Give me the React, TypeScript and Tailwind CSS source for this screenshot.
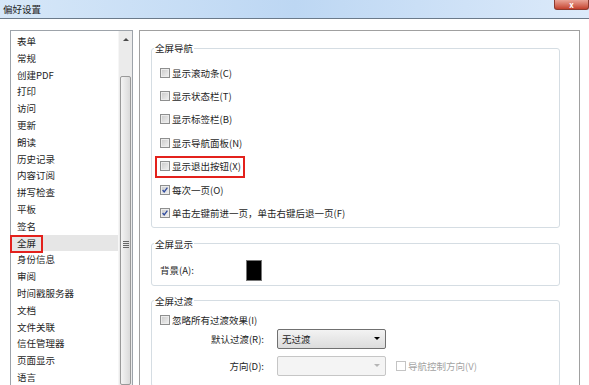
import React from "react";

const categories = [
    "表单", "常规", "创建PDF", "打印", "访问", "更新", "朗读", "历史记录", "内容订阅", "拼写检查",
    "平板", "签名", "全屏", "身份信息", "审阅", "时间戳服务器", "文档", "文件关联", "信任管理器", "页面显示", "语言",
];

const navOptions = [
    { label: "显示滚动条(C)", checked: false },
    { label: "显示状态栏(T)", checked: false },
    { label: "显示标签栏(B)", checked: false },
    { label: "显示导航面板(N)", checked: false },
    { label: "显示退出按钮(X)", checked: false, marked: true },
    { label: "每次一页(O)", checked: true },
    { label: "单击左键前进一页，单击右键后退一页(F)", checked: true },
];

function Checkbox({ checked = false, disabled = false }: { checked?: boolean; disabled?: boolean }) {
    if (disabled) {
        return <span className="w-[10px] h-[10px] shrink-0 border border-[#c4c4c4] bg-white" />;
    }
    return (
        <span className="relative w-[10px] h-[10px] shrink-0 border border-[#8e8f8f] bg-linear-to-br from-[#c9c9c9] to-[#f2f2f2] shadow-[inset_0_0_0_1px_#ececec]">
            {checked && (
                <svg viewBox="0 0 10 10" className="absolute inset-0 w-full h-full">
                    <polyline points="2,5 4,7.5 8,2" fill="none" stroke="#2e4a9e" strokeWidth="1.6" />
                </svg>
            )}
        </span>
    );
}

function Select({ value, disabled = false }: { value?: string; disabled?: boolean }) {
    return (
        <div
            className={
                disabled
                    ? "w-[109px] h-[20px] border border-[#c6c6c6] rounded-[2px] bg-[#f4f4f4] flex items-center justify-end pr-[5px]"
                    : "w-[109px] h-[20px] border border-[#707070] rounded-[2px] bg-linear-to-b from-[#f3f3f3] to-[#dcdcdc] flex items-center justify-between pl-[4px] pr-[5px]"
            }
        >
            {value && <span>{value}</span>}
            <span
                className={
                    disabled
                        ? "w-0 h-0 border-x-[3px] border-x-transparent border-t-[3px] border-t-[#b5b5b5]"
                        : "w-0 h-0 border-x-[3px] border-x-transparent border-t-[3px] border-t-black"
                }
            />
        </div>
    );
}

export default function App() {
    return (
        <div className="w-[589px] h-[385px] overflow-hidden bg-white flex flex-col text-[9.5px] text-[#1e1e1e] font-['Noto_Sans_CJK_SC','Noto_Sans',sans-serif]">
            {/* Title bar */}
            <div className="h-[19px] shrink-0 border-b border-[#6b7a8a] flex items-start justify-between bg-linear-to-r from-[#d6e7f8] via-[#bdd7f3] to-[#dceafa]">
                <span className="pl-[3px] leading-[18px]">偏好设置</span>
                <div className="w-[35px] h-[10px] rounded-b-[3px] border border-t-0 border-[#8c3b30] bg-linear-to-b from-[#e9a497] to-[#c3402d] flex items-center justify-center text-white text-[8px] leading-none font-bold">
                    x
                </div>
            </div>

            <div className="flex flex-1 min-h-0 pt-[11px] pl-[10px] pr-[9px] gap-[6px]">
                {/* Category list */}
                <div className="w-[123px] shrink-0 border border-b-0 border-[#9da3aa] flex">
                    <div className="flex-1 pt-[2px]">
                        {categories.map((c) =>
                            c === "全屏" ? (
                                <div key={c} className="relative h-[16.8px] leading-[16.8px] pl-[6px] bg-[#e6e6e6]">
                                    {c}
                                    <span className="absolute left-[-1px] top-[0px] w-[33px] h-[18px] border-2 border-[#e3211c]" />
                                </div>
                            ) : (
                                <div key={c} className="h-[16.8px] leading-[16.8px] pl-[6px]">
                                    {c}
                                </div>
                            )
                        )}
                    </div>
                    {/* Scrollbar */}
                    <div className="w-[14px] shrink-0 bg-[#ebebeb] border-l border-[#f6f6f6] flex flex-col">
                        <div className="h-[17px] flex items-center justify-center">
                            <span className="w-0 h-0 border-x-[3px] border-x-transparent border-b-[3px] border-b-[#4a4a4a]" />
                        </div>
                        <div className="h-[28px]" />
                        <div className="flex-1 mx-[1px] border border-[#999] rounded-[2px] bg-linear-to-r from-[#f4f4f4] to-[#dadada] flex flex-col items-center pt-[164px]">
                            <div className="flex flex-col gap-[1px]">
                                <span className="w-[6px] h-px bg-[#666]" />
                                <span className="w-[6px] h-px bg-[#666]" />
                                <span className="w-[6px] h-px bg-[#666]" />
                                <span className="w-[6px] h-px bg-[#666]" />
                            </div>
                        </div>
                    </div>
                </div>

                {/* Settings panel */}
                <div className="flex-1 border border-b-0 border-[#a0a0a0] pl-[11px] pr-[19px] pt-[10px]">
                    <fieldset className="border border-[#d5dde3] rounded-[3px] pb-[2px]">
                        <legend className="ml-[2px] px-[1px] leading-[14px]">全屏导航</legend>
                        <div className="pt-[6px]">
                            {navOptions.map((o) => (
                                <div key={o.label} className="relative h-[23.4px] flex items-center gap-[2px] pl-[8px]">
                                    <Checkbox checked={o.checked} />
                                    <span>{o.label}</span>
                                    {o.marked && (
                                        <span className="absolute left-[3px] top-[1px] w-[90px] h-[22px] border-2 border-[#e3211c]" />
                                    )}
                                </div>
                            ))}
                        </div>
                    </fieldset>

                    <fieldset className="mt-[9px] border border-[#d5dde3] rounded-[3px] pb-[4px]">
                        <legend className="ml-[2px] px-[1px] leading-[14px]">全屏显示</legend>
                        <div className="pt-[9px] pl-[8px] flex items-center">
                            <span className="w-[86px]">背景(A):</span>
                            <span className="w-[16px] h-[21px] bg-black border border-[#777]" />
                        </div>
                    </fieldset>

                    <fieldset className="mt-[8px] border border-[#d5dde3] rounded-[3px] pb-[10px]">
                        <legend className="ml-[2px] px-[1px] leading-[14px]">全屏过渡</legend>
                        <div className="pt-[3px] pl-[8px]">
                            <div className="h-[18px] flex items-center gap-[2px]">
                                <Checkbox />
                                <span>忽略所有过渡效果(I)</span>
                            </div>
                            <div className="flex items-center">
                                <span className="w-[104px] text-right">默认过渡(R):</span>
                                <div className="ml-[13px]">
                                    <Select value="无过渡" />
                                </div>
                            </div>
                            <div className="mt-[7px] flex items-center">
                                <span className="w-[104px] text-right">方向(D):</span>
                                <div className="ml-[13px]">
                                    <Select disabled />
                                </div>
                                <div className="ml-[10px] flex items-center gap-[2px] text-[#a3a3a3]">
                                    <Checkbox disabled />
                                    <span>导航控制方向(V)</span>
                                </div>
                            </div>
                        </div>
                    </fieldset>
                </div>
            </div>
        </div>
    );
}
